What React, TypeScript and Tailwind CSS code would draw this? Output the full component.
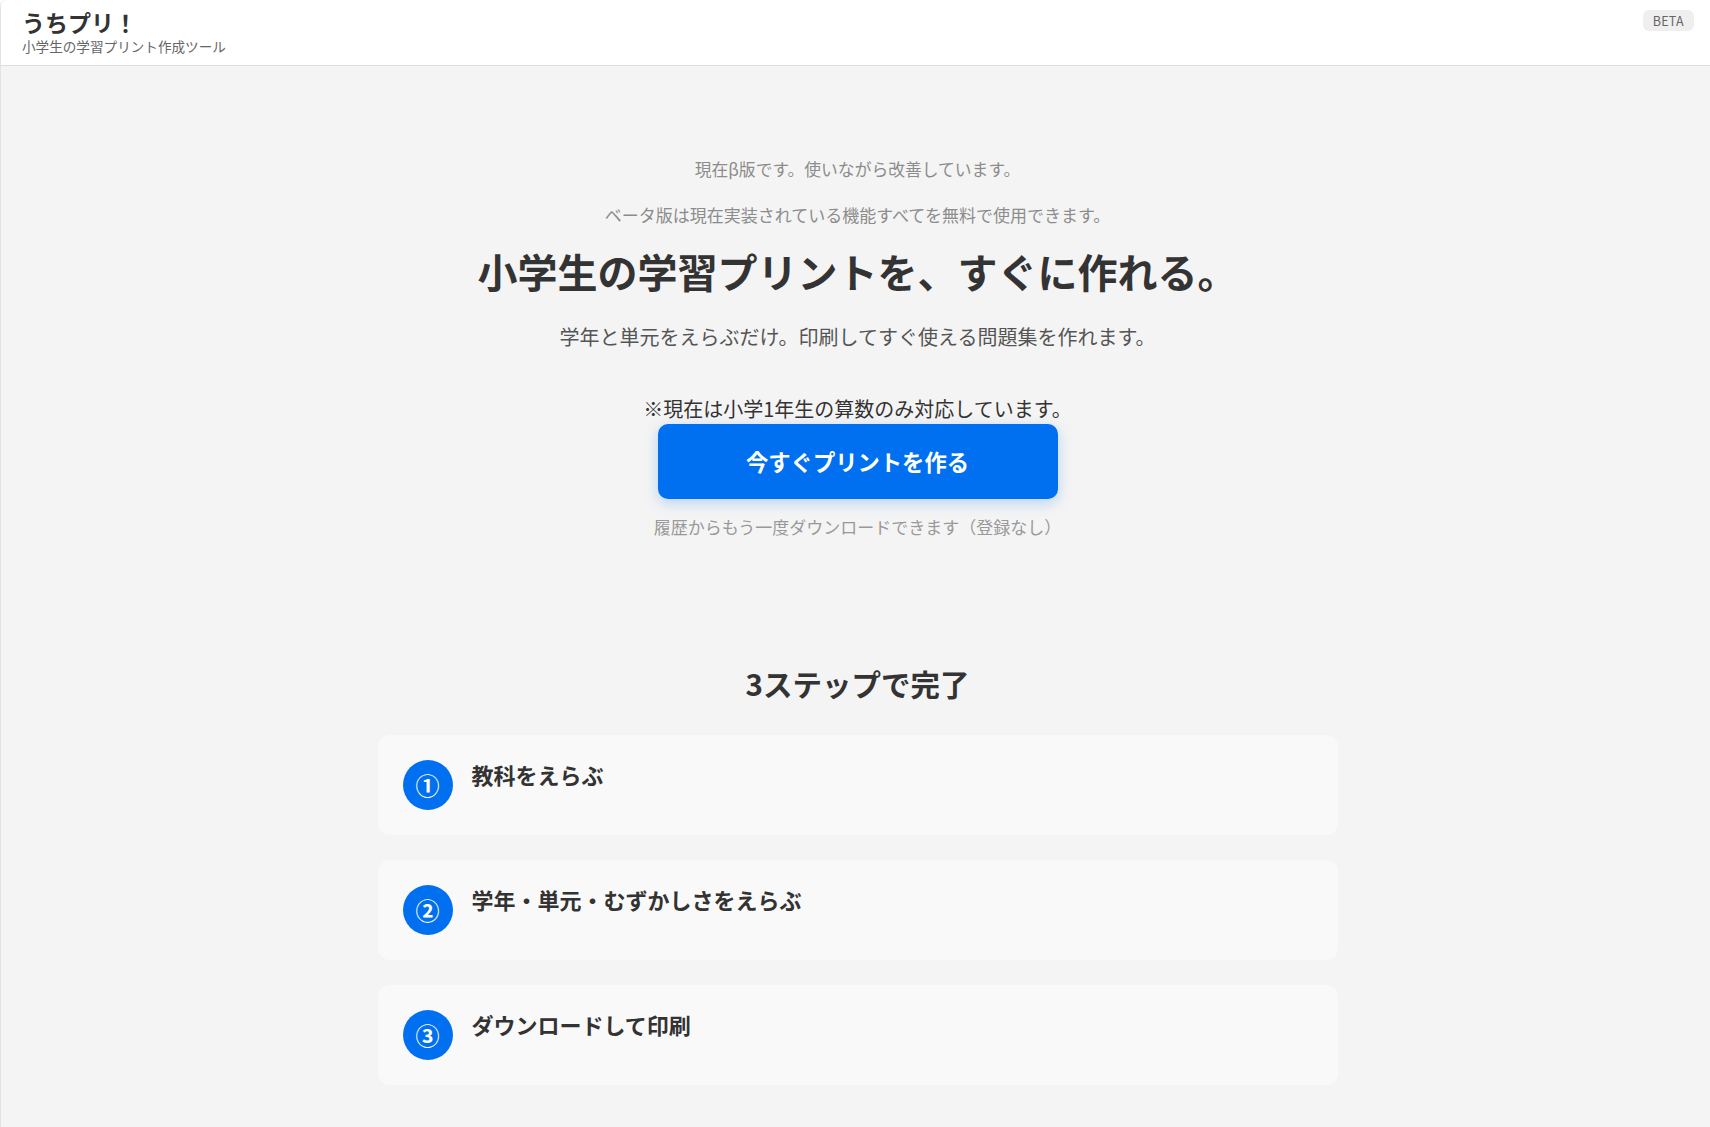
const STEPS = [
  { mark: "①", label: "教科をえらぶ" },
  { mark: "②", label: "学年・単元・むずかしさをえらぶ" },
  { mark: "③", label: "ダウンロードして印刷" },
];

const FONT = "font-['Noto_Sans_CJK_JP','Noto_Sans',sans-serif]";

export default function App() {
  return (
    <div className={`${FONT} min-h-screen bg-[#f4f4f4] text-[#333] border-l border-[#e3e3e3] rounded-tl-md`}>
      {/* Header */}
      <header className="h-[66px] bg-white border-b border-[#dedede] rounded-tl-md flex items-start justify-between pl-[21px] pr-4">
        <div className="pt-[7px]">
          <h1 className="text-[23px] leading-[30px] font-bold text-[#333]">うちプリ！</h1>
          <p className="text-[13.6px] leading-[20px] text-[#666] -mt-[1px]">小学生の学習プリント作成ツール</p>
        </div>
        <span className="mt-[10px] h-[21px] px-[10px] rounded-md bg-[#efefef] text-[12.5px] leading-[21px] text-[#666] tracking-wide">
          BETA
        </span>
      </header>

      <main className="flex flex-col items-center pt-[91px] pb-10 pl-[4px]">
        {/* Hero */}
        <p className="text-[16.8px] leading-[24px] text-[#8c8c8c]">現在β版です。使いながら改善しています。</p>
        <p className="mt-[22px] text-[17px] leading-[24px] text-[#8c8c8c]">
          ベータ版は現在実装されている機能すべてを無料で使用できます。
        </p>
        <h2 className="mt-[20px] text-[40px] leading-[48px] font-bold text-[#333]">
          小学生の学習プリントを、すぐに作れる。
        </h2>
        <p className="mt-[27px] text-[20px] leading-[30px] text-[#555]">
          学年と単元をえらぶだけ。印刷してすぐ使える問題集を作れます。
        </p>
        <p className="mt-[42px] text-[20px] leading-[30px] text-[#333]">
          ※現在は小学1年生の算数のみ対応しています。
        </p>
        <button className="w-[400px] h-[75px] rounded-[10px] bg-[#0070f0] text-white text-[22.3px] font-bold shadow-[0_4px_14px_rgba(0,112,240,0.25)]">
          今すぐプリントを作る
        </button>
        <p className="mt-[16px] text-[17px] leading-[24px] text-[#999]">
          履歴からもう一度ダウンロードできます（登録なし）
        </p>

        {/* Steps */}
        <h3 className="mt-[124px] text-[29.5px] leading-[40px] font-bold text-[#333]">3ステップで完了</h3>
        <div className="mt-[32px] w-[960px] flex flex-col gap-[25px]">
          {STEPS.map((step) => (
            <div key={step.mark} className="bg-[#f9f9f9] rounded-xl p-[25px] flex items-start gap-[19px]">
              <div className="w-[50px] h-[50px] rounded-full bg-[#0070f0] flex items-center justify-center text-white text-[24px] font-bold leading-none shrink-0">
                {step.mark}
              </div>
              <p className="-mt-[2px] text-[22px] leading-[32px] font-bold text-[#333]">{step.label}</p>
            </div>
          ))}
        </div>
      </main>
    </div>
  );
}
